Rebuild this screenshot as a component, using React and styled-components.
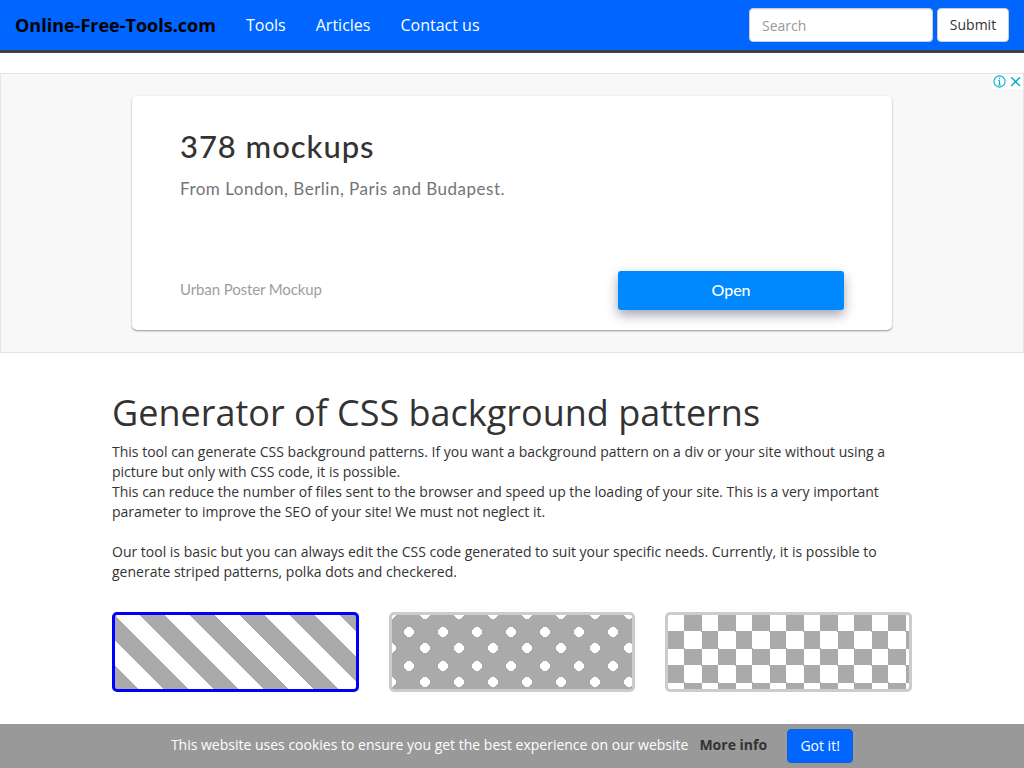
import React from 'react';
import styled, { createGlobalStyle, css } from 'styled-components';

const GlobalStyle = createGlobalStyle`
  *, *::before, *::after { box-sizing: border-box; }
  body {
    margin: 0;
    background: #fff;
    color: #333;
    font: 14px/20px "Open Sans", "Liberation Sans", sans-serif;
    overflow: hidden;
  }
  a { color: inherit; text-decoration: none; }
`;

const Page = styled.div`
  height: 768px;
  display: flex;
  flex-direction: column;
  overflow: hidden;
`;

const Navbar = styled.nav`
  flex: none;
  height: 53px;
  padding: 0 15px;
  display: flex;
  align-items: center;
  background: #06f;
  border-bottom: 3px solid #404040;
`;

const Brand = styled.a`
  width: 216px;
  white-space: nowrap;
  color: #000;
  font-size: 18px;
  font-weight: 700;
`;

const NavLinks = styled.div`
  flex: 1;
  display: flex;
  gap: 30px;
  padding-left: 15px;
  color: #fff;
  font-size: 16px;
`;

const SearchForm = styled.form`
  display: flex;
  gap: 4px;
`;

const SearchInput = styled.input`
  width: 184px;
  height: 34px;
  padding: 6px 12px;
  border: 1px solid #ccc;
  border-radius: 4px;
  box-shadow: inset 0 1px 1px rgba(0, 0, 0, 0.075);
  font: inherit;
  &::placeholder { color: #999; opacity: 1; }
`;

const SubmitButton = styled.button`
  width: 72px;
  height: 34px;
  padding: 0;
  border: 1px solid #ccc;
  border-radius: 4px;
  background: #fff;
  color: #333;
  font: inherit;
`;

const AdBanner = styled.section`
  flex: none;
  position: relative;
  height: 280px;
  margin-top: 20px;
  padding-top: 22px;
  border: 1px solid #e5e5e5;
  background: #f8f8f8;
  font-family: Lato, "Liberation Sans", sans-serif;
`;

const AdControls = styled.div`
  position: absolute;
  top: 0;
  right: 0;
  display: flex;
  gap: 1px;
  svg { display: block; background: #fff; }
`;

const AdCard = styled.div`
  width: 760px;
  height: 234px;
  margin: 0 auto;
  padding: 31px 48px 20px;
  display: flex;
  flex-direction: column;
  border-radius: 5px;
  background: #fff;
  box-shadow: 0 1px 2px rgba(0, 0, 0, 0.4);
`;

const AdTitle = styled.h2`
  margin: 0;
  color: #333;
  font-size: 31px;
  font-weight: 500;
  line-height: 38px;
  letter-spacing: 0.95px;
`;

const AdText = styled.p`
  margin: 13px 0 0;
  color: #757575;
  font-size: 17px;
  line-height: 22px;
  letter-spacing: 0.5px;
`;

const AdFooter = styled.div`
  margin-top: auto;
  display: flex;
  align-items: center;
  justify-content: space-between;
  color: #9e9e9e;
  font-size: 15px;
`;

const Advertiser = styled.span`
  padding-bottom: 3px;
  letter-spacing: -0.11px;
`;

const OpenButton = styled.button`
  width: 226px;
  height: 39px;
  padding: 0 0 3px;
  border: 0;
  border-radius: 3px;
  background: #08f;
  box-shadow: 0 5px 12px rgba(30, 35, 65, 0.42);
  color: #fff;
  font: 500 16px Lato, "Liberation Sans", sans-serif;
`;

const Main = styled.main`
  flex: 1;
  width: 800px;
  margin: 0 auto;
  padding-top: 40px;
`;

const Heading = styled.h1`
  margin: 0 0 9px;
  font-size: 36px;
  font-weight: 400;
  line-height: 40px;
`;

const Intro = styled.p`
  margin: 0 0 20px;
  &:last-of-type { margin-bottom: 30px; }
`;

const PatternGrid = styled.div`
  display: grid;
  grid-template-columns: repeat(3, 1fr);
  gap: 30px;
`;

const patterns = {
  stripes: css`
    background-color: #fff;
    background-image: linear-gradient(45deg, #fff 25%, #aaa 25%, #aaa 50%, #fff 50%, #fff 75%, #aaa 75%, #aaa);
    background-size: 50px 50px;
  `,
  dots: css`
    background-color: #aaa;
    background-image: radial-gradient(#fff 20%, transparent 20%), radial-gradient(#fff 20%, transparent 20%);
    background-size: 34px 34px;
    background-position: 0 0, 16px 16px;
  `,
  checks: css`
    background-color: #fff;
    background-image:
      linear-gradient(45deg, #aaa 25%, transparent 25%, transparent 75%, #aaa 75%, #aaa),
      linear-gradient(45deg, #aaa 25%, transparent 25%, transparent 75%, #aaa 75%, #aaa);
    background-size: 34px 34px;
    background-position: 0 0, 16px 16px;
  `,
};

const PatternTile = styled.div`
  height: 80px;
  border: 3px solid ${(p) => (p.$selected ? '#00f' : '#ccc')};
  border-radius: 5px;
  ${(p) => patterns[p.$pattern]}
`;

const CookieBar = styled.footer`
  flex: none;
  height: 44px;
  padding-bottom: 1px;
  display: flex;
  align-items: center;
  justify-content: center;
  background: #999;
  color: #fff;
`;

const CookieText = styled.span`
  padding-bottom: 2px;
`;

const MoreInfo = styled.a`
  margin: 0 20px 0 11px;
  padding-bottom: 2px;
  color: #333;
  font-weight: 700;
`;

const AcceptButton = styled.button`
  width: 66px;
  height: 34px;
  padding: 0;
  border: 1px solid #0a62dc;
  border-radius: 4px;
  background: #06f;
  color: #fff;
  font: inherit;
`;

export default function App() {
  return (
    <Page>
      <GlobalStyle />
      <Navbar>
        <Brand href="#">Online-Free-Tools.com</Brand>
        <NavLinks>
          <a href="#">Tools</a>
          <a href="#">Articles</a>
          <a href="#">Contact us</a>
        </NavLinks>
        <SearchForm>
          <SearchInput placeholder="Search" />
          <SubmitButton type="button">Submit</SubmitButton>
        </SearchForm>
      </Navbar>

      <AdBanner>
        <AdControls>
          <svg width="15" height="15" viewBox="0 0 15 15" fill="none" stroke="#00aecd">
            <circle cx="7.5" cy="7.5" r="5.6" strokeWidth="1.1" />
            <path d="M7.5 3.8v1.5M7.5 6.4v4.8M6.3 6.5h1.2M6.2 11h2.6" strokeWidth="1.2" />
          </svg>
          <svg width="15" height="15" viewBox="0 0 15 15" fill="none" stroke="#00aecd">
            <path d="M3.2 3.2l8.8 8.8M12 3.2L3.2 12" strokeWidth="1.4" />
          </svg>
        </AdControls>
        <AdCard>
          <AdTitle>378 mockups</AdTitle>
          <AdText>From London, Berlin, Paris and Budapest.</AdText>
          <AdFooter>
            <Advertiser>Urban Poster Mockup</Advertiser>
            <OpenButton>Open</OpenButton>
          </AdFooter>
        </AdCard>
      </AdBanner>

      <Main>
        <Heading>Generator of CSS background patterns</Heading>
        <Intro>
          This tool can generate CSS background patterns. If you want a background pattern on a div or your site without using a picture but only with CSS code, it is possible.
          <br />
          This can reduce the number of files sent to the browser and speed up the loading of your site. This is a very important parameter to improve the SEO of your site! We must not neglect it.
        </Intro>
        <Intro>
          Our tool is basic but you can always edit the CSS code generated to suit your specific needs. Currently, it is possible to generate striped patterns, polka dots and checkered.
        </Intro>
        <PatternGrid>
          <PatternTile $pattern="stripes" $selected />
          <PatternTile $pattern="dots" />
          <PatternTile $pattern="checks" />
        </PatternGrid>
      </Main>

      <CookieBar>
        <CookieText>This website uses cookies to ensure you get the best experience on our website</CookieText>
        <MoreInfo href="#">More info</MoreInfo>
        <AcceptButton>Got it!</AcceptButton>
      </CookieBar>
    </Page>
  );
}
